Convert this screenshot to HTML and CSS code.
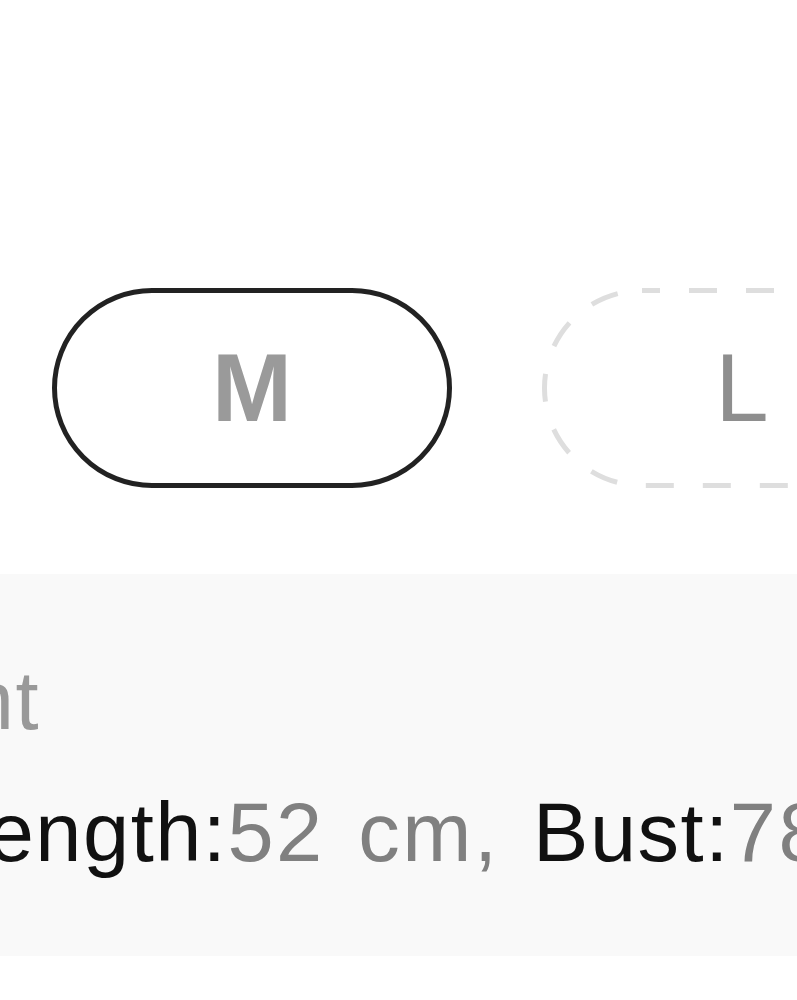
FILE: index.html
```html
<!DOCTYPE html>
<html lang="en">
<head>
<meta charset="utf-8">
<title>Size selector</title>
<link rel="stylesheet" href="styles.css">
</head>
<body>
<div class="page">
  <div class="sizes">
    <button class="size size-active">M</button>
    <button class="size size-disabled">
      <svg class="dash" viewBox="0 0 400 200" aria-hidden="true"><rect x="2.5" y="2.5" width="395" height="195" rx="97.5" ry="97.5"/></svg>
      <span class="size-label">L</span>
    </button>
  </div>
  <div class="info">
    <div class="info-title">Measurement</div>
    <div class="info-line"><span class="k">Length:</span><span class="v">52 cm, </span><span class="k">Bust:</span><span class="v">78 cm</span></div>
  </div>
</div>
</body>
</html>
```

FILE: styles.css
```css
html, body {
  margin: 0;
  padding: 0;
  background: #ffffff;
}
.page {
  width: 797px;
  height: 1000px;
  overflow: hidden;
  font-family: "Liberation Sans", Arial, sans-serif;
}
.sizes {
  display: flex;
  gap: 90px;
  padding: 288px 0 0 52px;
  height: 200px;
}
.size {
  flex: 0 0 auto;
  box-sizing: border-box;
  width: 400px;
  height: 200px;
  border-radius: 100px;
  background: #ffffff;
  display: flex;
  align-items: center;
  justify-content: center;
  font-family: "Liberation Sans", Arial, sans-serif;
  font-size: 96px;
  color: #9a9a9a;
  padding: 0;
  margin: 0;
  position: relative;
  line-height: 1;
}
.size-active {
  border: 5px solid #222222;
  font-weight: 700;
}
.size-disabled {
  border: none;
  font-weight: 400;
  color: #8e8e8e;
}
.dash {
  position: absolute;
  inset: 0;
  width: 400px;
  height: 200px;
}
.dash rect {
  fill: none;
  stroke: #dedede;
  stroke-width: 5;
  stroke-dasharray: 28 29;
  stroke-dashoffset: 10;
}
.size-label {
  position: relative;
}
.info {
  margin-top: 86px;
  background: #f9f9f9;
  padding: 61px 0 57px 0;
  font-size: 83px;
  line-height: 132px;
  letter-spacing: 1.5px;
  word-spacing: 8px;
  white-space: nowrap;
}
.info-title {
  color: #999999;
  margin-left: -484px;
}
.info-line {
  margin-left: -60px;
}
.k {
  color: #111111;
}
.v {
  color: #808080;
  letter-spacing: 2.5px;
}
```
